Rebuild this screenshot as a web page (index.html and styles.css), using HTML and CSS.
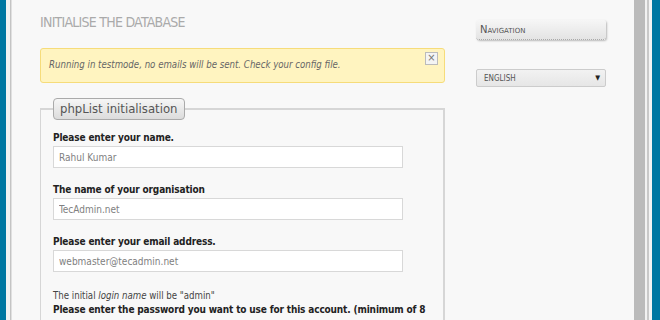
FILE: index.html
```html
<!DOCTYPE html>
<html lang="en">
  <head>
    <meta charset="UTF-8" />
    <title>phpList - Initialise the database</title>
    <link rel="stylesheet" href="styles.css">
  </head>
  <body>
    <div class="edge-left"></div>

    <div class="page">
      <div class="main">
        <h1>Initialise the database</h1>

        <!-- Test mode warning -->
        <div class="note">
          <span>Running in testmode, no emails will be sent. Check your config file.</span>
          <span class="close">&#215;</span>
        </div>

        <fieldset class="init">
          <legend>phpList initialisation</legend>

          <div class="form-group">
            <label for="adminname">Please enter your name.</label>
            <input type="text" id="adminname" value="Rahul Kumar" />
          </div>

          <div class="form-group">
            <label for="orgname">The name of your organisation</label>
            <input type="text" id="orgname" value="TecAdmin.net" />
          </div>

          <div class="form-group">
            <label for="adminemail">Please enter your email address.</label>
            <input type="text" id="adminemail" value="webmaster@tecadmin.net" />
          </div>

          <p class="info">The initial <em>login name</em> will be "admin"</p>
          <label for="adminpassword" class="long">Please enter the password you want to use for this account. (minimum of 8 characters)</label>
        </fieldset>
      </div>

      <div class="sidebar">
        <div class="nav-title">Navigation</div>
        <div class="lang">
          <span>English</span>
          <span class="arrow">&#9660;</span>
        </div>
      </div>
    </div>

    <div class="edge-right"></div>
  </body>
</html>
```

FILE: styles.css
```css
/* Global Styles */
body {
  font-family: "DejaVu Sans Condensed", "DejaVu Sans", sans-serif;
  background-color: #f8f8f8;
  margin: 0;
  padding: 0;
  display: flex;
  height: 320px;
  overflow: hidden;
  color: #333;
}

/* Window edges */
.edge-left {
  width: 12px;
  flex-shrink: 0;
  background: linear-gradient(to right, #0077a2 0 6px, #f3f3f3 6px 10px, #c4c4c4 10px 11px, #e0e0e0 11px 12px);
}

.edge-right {
  width: 26px;
  flex-shrink: 0;
  background: linear-gradient(to right, #bbbbbb 0 11px, #f2f2f2 11px 13px, #c9c9c9 13px 15px, #f4f4f4 15px 18px, #0077a2 18px);
}

.page {
  flex: 1;
  display: flex;
  padding: 0 28px;
}

.main {
  width: 405px;
}

h1 {
  margin: 13px 0 0;
  font-size: 14px;
  font-weight: normal;
  letter-spacing: -0.75px;
  text-transform: uppercase;
  color: #aaa;
  line-height: 18px;
}

/* Warning box */
.note {
  margin-top: 17px;
  height: 35px;
  box-sizing: border-box;
  padding: 0 6px 0 8px;
  display: flex;
  justify-content: space-between;
  align-items: flex-start;
  background-color: #fff4c0;
  border: 1px solid #f6dc7a;
  border-radius: 3px;
  font-size: 9.6px;
  font-style: italic;
  color: #666;
}

.note span:first-child {
  margin-top: 10px;
}

.close {
  margin-top: 3px;
  width: 11px;
  height: 11px;
  border: 1px solid #bbb;
  background: #f4f4f4;
  font-style: normal;
  font-size: 11px;
  line-height: 10px;
  text-align: center;
  color: #777;
}

/* Fieldset */
fieldset.init {
  margin: 15px 0 0;
  padding: 11px 0 0 12px;
  border-style: solid;
  border-width: 2px 2px 0 1px;
  border-color: #d6d6d6;
}

legend {
  padding: 2px 6px 3px;
  border: 1px solid #aaa;
  border-radius: 4px;
  background: linear-gradient(#f6f6f6, #dcdcdc);
  font-size: 13px;
  color: #555;
}

.form-group {
  margin-bottom: 15px;
}

label {
  display: block;
  font-weight: bold;
  font-size: 10px;
  letter-spacing: -0.15px;
  color: #222;
  line-height: 14px;
}

input {
  display: block;
  margin-top: 1px;
  width: 350px;
  height: 22px;
  box-sizing: border-box;
  padding: 0 5px;
  border: 1px solid #d8d8d8;
  background: #fff;
  font-family: "DejaVu Sans Condensed", sans-serif;
  font-size: 10px;
  color: #808080;
}

.info {
  margin: 0;
  padding-top: 2px;
  font-size: 9.6px;
  color: #444;
  line-height: 14px;
}

.long {
  width: 375px;
  margin-top: -1px;
  line-height: 16px;
}

/* Sidebar */
.sidebar {
  margin-left: 31px;
  padding-top: 20px;
  width: 130px;
}

.nav-title {
  height: 20px;
  box-sizing: border-box;
  padding: 4px 4px 0;
  background: linear-gradient(#f6f6f6, #e4e4e4);
  border-radius: 3px;
  border-bottom: 1px dotted #999;
  box-shadow: 1px 1px 2px rgba(0, 0, 0, 0.25);
  font-family: "DejaVu Sans", sans-serif;
  font-size: 10px;
  font-variant: small-caps;
  color: #555;
}

.lang {
  margin-top: 29px;
  height: 18px;
  box-sizing: border-box;
  padding: 0 5px 0 7px;
  display: flex;
  justify-content: space-between;
  align-items: center;
  background: linear-gradient(#f2f2f2, #e6e6e6);
  border: 1px solid #ccc;
  border-radius: 2px;
  font-size: 8px;
  text-transform: uppercase;
  color: #555;
}

.arrow {
  font-size: 7px;
  color: #222;
}
```
